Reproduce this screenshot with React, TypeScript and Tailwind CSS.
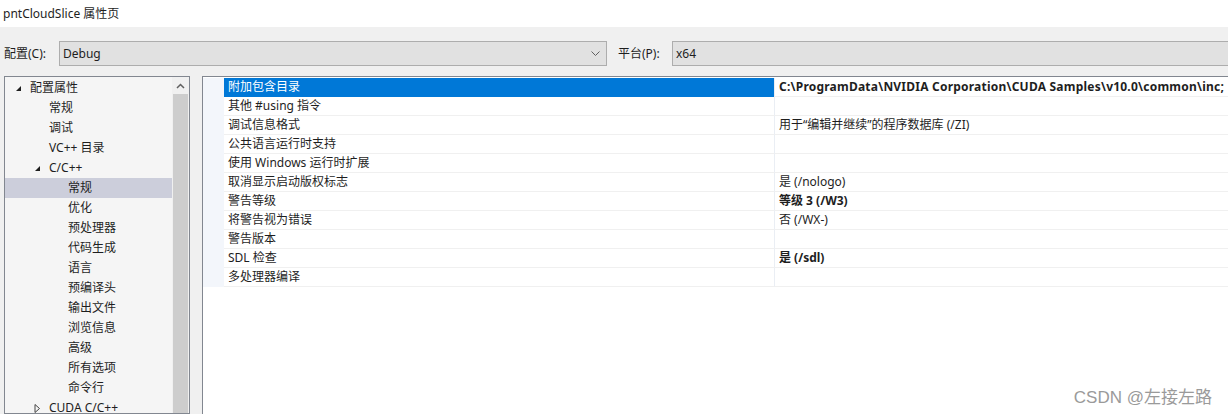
import React from 'react';

const FONT = { fontFamily: '"Noto Sans", "Noto Sans CJK SC", sans-serif' };

type TreeItem = { label: string; level: number; arrow?: 'open' | 'closed'; selected?: boolean };

const TREE: TreeItem[] = [
  { label: '配置属性', level: 0, arrow: 'open' },
  { label: '常规', level: 1 },
  { label: '调试', level: 1 },
  { label: 'VC++ 目录', level: 1 },
  { label: 'C/C++', level: 1, arrow: 'open' },
  { label: '常规', level: 2, selected: true },
  { label: '优化', level: 2 },
  { label: '预处理器', level: 2 },
  { label: '代码生成', level: 2 },
  { label: '语言', level: 2 },
  { label: '预编译头', level: 2 },
  { label: '输出文件', level: 2 },
  { label: '浏览信息', level: 2 },
  { label: '高级', level: 2 },
  { label: '所有选项', level: 2 },
  { label: '命令行', level: 2 },
  { label: 'CUDA C/C++', level: 1, arrow: 'closed' },
];

const PROPS: { name: string; value: string; bold?: boolean; selected?: boolean }[] = [
  { name: '附加包含目录', value: 'C:\\ProgramData\\NVIDIA Corporation\\CUDA Samples\\v10.0\\common\\inc;', bold: true, selected: true },
  { name: '其他 #using 指令', value: '' },
  { name: '调试信息格式', value: '用于“编辑并继续”的程序数据库 (/ZI)' },
  { name: '公共语言运行时支持', value: '' },
  { name: '使用 Windows 运行时扩展', value: '' },
  { name: '取消显示启动版权标志', value: '是 (/nologo)' },
  { name: '警告等级', value: '等级 3 (/W3)', bold: true },
  { name: '将警告视为错误', value: '否 (/WX-)' },
  { name: '警告版本', value: '' },
  { name: 'SDL 检查', value: '是 (/sdl)', bold: true },
  { name: '多处理器编译', value: '' },
];

function Arrow({ kind }: { kind: 'open' | 'closed' }) {
  if (kind === 'open') {
    return (
      <svg width="7" height="7" viewBox="0 0 7 7" className="shrink-0">
        <path d="M6 1 L6 6 L1 6 Z" fill="#1e1e1e" />
      </svg>
    );
  }
  return (
    <svg width="7" height="9" viewBox="0 0 7 9" className="shrink-0">
      <path d="M1 0.5 L5.5 4.5 L1 8.5 Z" fill="none" stroke="#444" strokeWidth="1" />
    </svg>
  );
}

function Tree() {
  return (
    <div className="ml-[4px] w-[186px] shrink-0 h-full border border-[#828790] bg-[#f5f5f5] flex">
      <div className="flex-1 pt-[1px]">
        {TREE.map((t, i) => (
          <div
            key={i}
            className={`h-[20px] flex items-center ${t.selected ? 'bg-[#cccedb]' : ''}`}
            style={{ paddingLeft: 10 + t.level * 19 }}
          >
            <span className="w-[15px] flex items-center">{t.arrow && <Arrow kind={t.arrow} />}</span>
            <span className="text-[12px] text-[#1e1e1e] whitespace-nowrap">{t.label}</span>
          </div>
        ))}
      </div>
      <div className="w-[17px] bg-[#f0f0f0] flex flex-col">
        <div className="h-[17px] flex items-center justify-center">
          <svg width="9" height="6" viewBox="0 0 9 6">
            <path d="M1 5 L4.5 1.5 L8 5" fill="none" stroke="#606060" strokeWidth="1.5" />
          </svg>
        </div>
        <div className="flex-1 mx-[1px] bg-[#cdcdcd]" />
      </div>
    </div>
  );
}

function Grid() {
  return (
    <div className="ml-[12px] flex-1 min-w-0 h-full border-l border-t border-[#828790] bg-white pt-[1px] overflow-hidden">
      {PROPS.map((p, i) => (
        <div key={i} className="h-[19px] flex">
          <div className="w-[21px] shrink-0 bg-[#f3f6fb]" />
          <div
            className={`w-[550px] shrink-0 flex items-center pl-[4px] text-[12px] whitespace-nowrap border-b ${
              p.selected ? 'bg-[#0078d7] text-white border-[#0078d7]' : 'text-[#1e1e1e] border-[#f0f0f0]'
            }`}
          >
            {p.name}
          </div>
          <div className="flex-1 min-w-0 flex items-center pl-[4px] border-l border-b border-l-[#eaeef4] border-b-[#f0f0f0] overflow-hidden">
            <span
              className={`text-[12px] whitespace-nowrap text-[#1e1e1e] ${p.bold ? 'font-bold' : ''} ${
                p.selected ? 'tracking-[0.22px]' : ''
              }`}
            >
              {p.value}
            </span>
          </div>
        </div>
      ))}
    </div>
  );
}

export default function App() {
  return (
    <div className="relative w-[1228px] h-[414px] overflow-hidden bg-[#f0f0f0] text-[#1e1e1e]" style={FONT}>
      <div className="h-[27px] bg-white flex items-center pl-[3px] text-[12px]">pntCloudSlice 属性页</div>

      <div className="mt-[14px] h-[25px] flex items-center">
        <span className="ml-[4px] w-[55px] text-[12px]">配置(C):</span>
        <div className="w-[548px] h-[25px] border border-[#adadad] bg-[#e1e1e1] flex items-center pl-[3px] pr-[6px]">
          <span className="flex-1 text-[12px]">Debug</span>
          <svg width="9" height="6" viewBox="0 0 9 6">
            <path d="M0.5 0.5 L4.5 4.5 L8.5 0.5" fill="none" stroke="#606060" strokeWidth="1" />
          </svg>
        </div>
        <span className="ml-[11px] w-[54px] text-[12px]">平台(P):</span>
        <div className="flex-1 h-[25px] border-y border-l border-[#adadad] bg-[#e1e1e1] flex items-center pl-[3px]">
          <span className="text-[12px]">x64</span>
        </div>
      </div>

      <div className="mt-[10px] h-[338px] flex">
        <Tree />
        <Grid />
      </div>

      <div
        className="absolute right-[16px] bottom-[8px] text-[17px] leading-none text-[#9a9a9a]"
        style={{ fontFamily: '"Liberation Sans", "Noto Sans CJK SC", sans-serif' }}
      >
        CSDN @左接左路
      </div>
    </div>
  );
}
